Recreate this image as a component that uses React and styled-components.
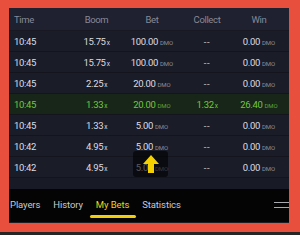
import styled, { createGlobalStyle } from "styled-components";

const Global = createGlobalStyle`
  html, body { margin: 0; padding: 0; background: #262626; }
  body { font-family: Roboto, "Noto Sans", sans-serif; }
`;

const Page = styled.div`
  width: 300px;
  height: 235px;
  background: #262626;
  overflow: hidden;
`;

const Frame = styled.div`
  width: 300px;
  height: 232px;
  box-sizing: border-box;
  border-style: solid;
  border-color: #e94f3d;
  border-width: 8px 11px 9px 9px;
  background: #161821;
  display: flex;
  flex-direction: column;
  position: relative;
`;

const Table = styled.div`
  display: flex;
  flex-direction: column;
  background: #181a25;
  padding-bottom: 11px;
`;

const Row = styled.div`
  display: grid;
  grid-template-columns: 57px 61px 50px 60px 44px;
  align-items: center;
  height: ${(p) => (p.$head ? 22 : 20)}px;
  background: ${(p) => (p.$head ? "#1f2130" : p.$win ? "#18261a" : "#1a1c28")};
  border-bottom: 1px solid ${(p) => (p.$head ? "#171822" : "#13141c")};
  font-size: 9.5px;
  letter-spacing: -0.35px;
  color: ${(p) => (p.$head ? "#878a98" : p.$win ? "#72c83d" : "#dcdde3")};
  white-space: nowrap;
`;

const Cell = styled.div`
  text-align: ${(p) => (p.$left ? "left" : "center")};
  padding-left: ${(p) => (p.$left ? "5px" : "0")};
`;

const Dash = styled.span`
  letter-spacing: 0.5px;
  color: #c9cad0;
`;

const Unit = styled.span`
  font-size: 6px;
  letter-spacing: 0;
  margin-left: 2px;
  color: ${(p) => (p.$win ? "#5fa535" : "#8e909c")};
`;

const X = styled.span`
  font-size: 6.5px;
  margin-left: 1px;
`;

const Tabs = styled.div`
  flex: 1;
  background: #040404;
  border-bottom: 1px solid #1e1e22;
  display: flex;
  align-items: center;
  position: relative;
  padding-top: 2px;
`;

const TabList = styled.div`
  display: flex;
  gap: 13px;
  margin-left: 1px;
`;

const Tab = styled.div`
  font-size: 9.5px;
  letter-spacing: -0.1px;
  color: ${(p) => (p.$active ? "#f2cf1d" : "#c9cacf")};
  position: relative;
  height: 26px;
  line-height: 22px;
  &::after {
    content: "";
    display: ${(p) => (p.$active ? "block" : "none")};
    position: absolute;
    left: -6px;
    right: -7px;
    bottom: 2px;
    height: 3px;
    border-radius: 2px;
    background: #f0cf10;
  }
`;

const Burger = styled.div`
  position: absolute;
  right: 0;
  top: 13px;
  width: 15px;
  display: flex;
  flex-direction: column;
  gap: 4px;
  span {
    height: 1px;
    background: #a9aab0;
  }
`;

const ScrollUp = styled.div`
  position: absolute;
  left: 124px;
  top: 143px;
  width: 35px;
  height: 26px;
  border-radius: 3px;
  background: rgba(0, 0, 0, 0.6);
  display: flex;
  align-items: center;
  justify-content: center;
`;

const rows = [
  ["10:45", "15.75", "100.00", "--", "0.00"],
  ["10:45", "15.75", "100.00", "--", "0.00"],
  ["10:45", "2.25", "20.00", "--", "0.00"],
  ["10:45", "1.33", "20.00", "1.32", "26.40", true],
  ["10:45", "1.33", "5.00", "--", "0.00"],
  ["10:42", "4.95", "5.00", "--", "0.00"],
  ["10:42", "4.95", "5.00", "--", "0.00"],
];

export default function App() {
  return (
    <Page>
      <Global />
      <Frame>
        <Table>
          <Row $head>
            <Cell $left>Time</Cell>
            <Cell>Boom</Cell>
            <Cell>Bet</Cell>
            <Cell>Collect</Cell>
            <Cell>Win</Cell>
          </Row>
          {rows.map((r, i) => (
            <Row key={i} $win={r[5]}>
              <Cell $left>{r[0]}</Cell>
              <Cell>
                {r[1]}
                <X>x</X>
              </Cell>
              <Cell>
                {r[2]}
                <Unit $win={r[5]}>DMO</Unit>
              </Cell>
              <Cell>
                {r[3] === "--" ? (
                  <Dash>--</Dash>
                ) : (
                  <>
                    {r[3]}
                    <X>x</X>
                  </>
                )}
              </Cell>
              <Cell>
                {r[4]}
                <Unit $win={r[5]}>DMO</Unit>
              </Cell>
            </Row>
          ))}
        </Table>
        <Tabs>
          <TabList>
            <Tab>Players</Tab>
            <Tab>History</Tab>
            <Tab $active>My Bets</Tab>
            <Tab>Statistics</Tab>
          </TabList>
          <Burger>
            <span />
            <span />
          </Burger>
        </Tabs>
        <ScrollUp>
          <svg width="16" height="18" viewBox="0 0 16 18">
            <path d="M8 0 L16 9 L11 9 L11 18 L5 18 L5 9 L0 9 Z" fill="#f5d000" />
          </svg>
        </ScrollUp>
      </Frame>
    </Page>
  );
}
